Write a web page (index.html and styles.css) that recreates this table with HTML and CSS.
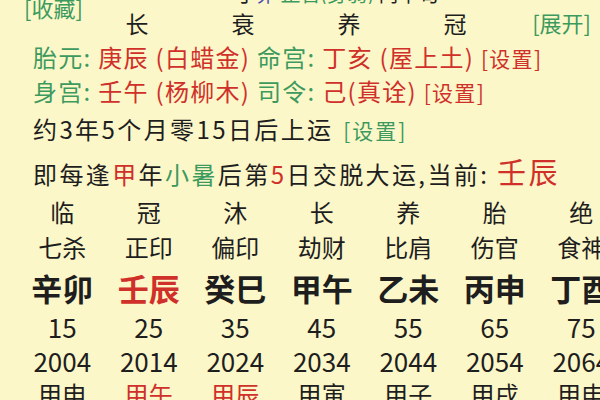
FILE: index.html
```html
<!DOCTYPE html>
<html lang="zh-CN">
<head>
<meta charset="utf-8">
<link rel="stylesheet" href="styles.css">
</head>
<body>
<div class="page">
  <div class="head">
    <span class="link fav">[收藏]</span>
    <div class="mid">
      <div class="cut"><span class="cutline"><span class="k">丁</span><span class="b">卯</span> <span class="g">正官(身弱)</span> <span class="k">丙申旬</span></span></div>
      <div class="phase"><span>长</span><span>衰</span><span>养</span><span>冠</span></div>
    </div>
    <span class="link open">[展开]</span>
  </div>
  <div class="line l1"><span class="g">胎元:</span> <span class="r">庚辰 (白蜡金)</span> <span class="g">命宫:</span> <span class="r">丁亥 (屋上土)</span> <span class="r set">[设置]</span></div>
  <div class="line l1"><span class="g">身宫:</span> <span class="r">壬午 (杨柳木)</span> <span class="g">司令:</span> <span class="r">己(真诠)</span> <span class="r set">[设置]</span></div>
  <div class="line tall">约3年5个月零15日后上运 <span class="g set small">[设置]</span></div>
  <div class="line tall">即每逢<span class="r">甲</span>年<span class="g">小暑</span>后第<span class="r">5</span>日交脱大运,当前: <span class="r big">壬辰</span></div>
  <div class="grid">
    <span class="c r1">临</span><span class="c r1">冠</span><span class="c r1">沐</span><span class="c r1">长</span><span class="c r1">养</span><span class="c r1">胎</span><span class="c r1">绝</span>
    <span class="c r2">七杀</span><span class="c r2">正印</span><span class="c r2">偏印</span><span class="c r2">劫财</span><span class="c r2">比肩</span><span class="c r2">伤官</span><span class="c r2">食神</span>
    <span class="c r3">辛卯</span><span class="c r3 r">壬辰</span><span class="c r3">癸巳</span><span class="c r3">甲午</span><span class="c r3">乙未</span><span class="c r3">丙申</span><span class="c r3">丁酉</span>
    <span class="c r4">15</span><span class="c r4">25</span><span class="c r4">35</span><span class="c r4">45</span><span class="c r4">55</span><span class="c r4">65</span><span class="c r4">75</span>
    <span class="c r5">2004</span><span class="c r5">2014</span><span class="c r5">2024</span><span class="c r5">2034</span><span class="c r5">2044</span><span class="c r5">2054</span><span class="c r5">2064</span>
    <span class="c r6">甲申</span><span class="c r6 r">甲午</span><span class="c r6 r">甲辰</span><span class="c r6">甲寅</span><span class="c r6">甲子</span><span class="c r6">甲戌</span><span class="c r6">甲申</span>
  </div>
</div>
</body>
</html>
```
FILE: styles.css
```css
html, body {
  margin: 0;
  padding: 0;
  overflow: hidden;
  background: #fcf7c9;
}
.page {
  width: 600px;
  height: 400px;
  overflow: hidden;
  font-family: "Noto Sans CJK SC", "Noto Sans", sans-serif;
  color: #1e1e1e;
  font-size: 24px;
}
.g { color: #3d9a5e; }
.r { color: #d0302a; }
.k { color: #222; }
.b { color: #4a4ab0; }

.head {
  display: flex;
  height: 40px;
}
.link {
  color: #3d9a5e;
  font-size: 22px;
  line-height: 24px;
  white-space: nowrap;
}
.fav {
  box-sizing: border-box;
  width: 84px;
  flex: none;
  padding-left: 24px;
  margin-top: -5px;
}
.open {
  margin-top: 10px;
  margin-left: auto;
  padding-right: 9px;
}
.mid {
  display: flex;
  flex-direction: column;
}
.cut {
  height: 4px;
  overflow: hidden;
  width: 440px;
}
.cutline {
  display: block;
  font-size: 20px;
  line-height: 20px;
  margin-top: -16px;
  padding-left: 152px;
  white-space: nowrap;
}
.phase {
  display: flex;
  font-size: 23px;
  line-height: 30px;
  margin-top: 4px;
}
.phase span {
  width: 106px;
  text-align: center;
}
.line {
  padding-left: 33px;
  line-height: 34px;
  height: 34px;
  white-space: nowrap;
}
.line.l1 { letter-spacing: 1.3px; }
.line.tall {
  line-height: 42px;
  height: 42px;
  letter-spacing: 2.4px;
}
.set { font-size: 21px; }
.small { font-size: 21px; margin-left: 2px; letter-spacing: 2px; }
.big { font-size: 29px; }

.grid {
  display: grid;
  grid-template-columns: repeat(7, 86.5px);
  grid-template-rows: 40px 30px 50px 30px 38px 28px;
  padding-left: 19px;
  width: 700px;
}
.c {
  text-align: center;
  white-space: nowrap;
  font-size: 24px;
  line-height: 1;
  align-self: center;
}
.r3 {
  font-size: 31px;
  font-weight: 700;
}
.r4, .r5 { font-size: 26px; }
```
